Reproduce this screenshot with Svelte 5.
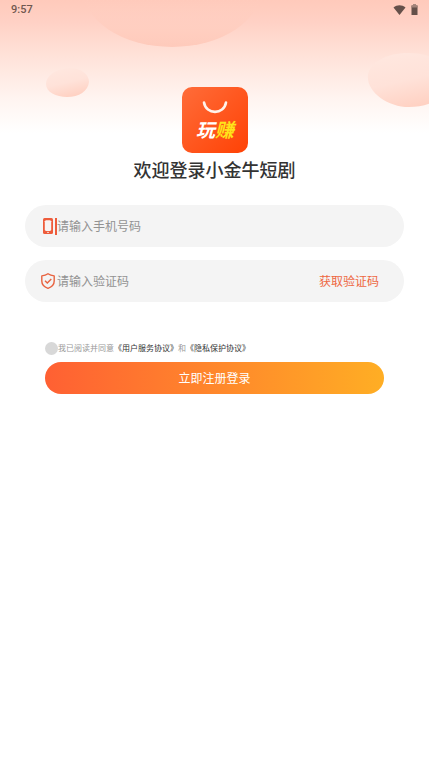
<script lang="ts">
  let phone = $state("");
  let code = $state("");
  let agreed = $state(false);
</script>

<div class="page">
  <svg class="backdrop" viewBox="0 0 429 140" preserveAspectRatio="none" aria-hidden="true">
    <defs>
      <linearGradient id="sky" x1="0" y1="0" x2="0" y2="1">
        <stop offset="0" stop-color="#ffcabb" />
        <stop offset="0.16" stop-color="#ffd1c5" />
        <stop offset="0.35" stop-color="#ffdfd5" />
        <stop offset="0.7" stop-color="#fff4f0" />
        <stop offset="0.95" stop-color="#ffffff" />
      </linearGradient>
      <linearGradient id="dome" x1="0" y1="0" x2="0" y2="1">
        <stop offset="0.6" stop-color="#ffcdbf" stop-opacity="0" />
        <stop offset="0.9" stop-color="#ffccbd" stop-opacity="0.9" />
        <stop offset="1" stop-color="#fecabb" />
      </linearGradient>
      <linearGradient id="pebble" x1="0.3" y1="0" x2="0.65" y2="1">
        <stop offset="0" stop-color="#ffe7df" />
        <stop offset="0.5" stop-color="#ffe2d9" />
        <stop offset="1" stop-color="#ffd0c1" />
      </linearGradient>
    </defs>
    <rect width="429" height="140" fill="url(#sky)" />
    <ellipse cx="172" cy="-13" rx="90" ry="60" fill="url(#dome)" />
    <path d="M46 84C46 76 55 69 69 68C82 68 89 75 89 82C88 91 79 97 67 97C56 97 46 92 46 84Z" fill="url(#pebble)" />
    <path d="M368 75C370 62 387 53 408 53C432 53 450 64 450 80C450 97 430 107 409 107C387 107 366 91 368 75Z" fill="url(#pebble)" />
  </svg>

  <header class="status">
    <span>9:57</span>
    <svg width="28" height="12" viewBox="0 0 28 12" aria-hidden="true">
      <path d="M0.5 3.5C4 0.4 9 0.4 12.5 3.5L6.5 11Z" fill="#65504a" />
      <path d="M18.5 1.5H20V0.5H23V1.5H24.5V11H18.5Z" fill="#65504a" />
      <path d="M18.5 1.5H20V0.5H23V1.5H24.5V3.5H18.5Z" fill="#a28279" />
    </svg>
  </header>

  <main>
    <svg class="logo" width="66" height="66" viewBox="0 0 66 66" role="img" aria-label="玩赚">
      <defs>
        <linearGradient id="tile" x1="0" y1="0" x2="1" y2="1">
          <stop offset="0" stop-color="#ff6c39" />
          <stop offset="1" stop-color="#ff4205" />
        </linearGradient>
      </defs>
      <rect width="66" height="66" rx="10" fill="url(#tile)" />
      <path d="M22 15.5C24 28 42 28 44 15.5" fill="none" stroke="#fff3eb" stroke-width="2.6" stroke-linecap="round" />
      <text x="14" y="50"><tspan fill="#fff">玩</tspan><tspan fill="#ffe31a">赚</tspan></text>
    </svg>
    <h1>欢迎登录小金牛短剧</h1>

    <form onsubmit={(event) => event.preventDefault()}>
      <div class="field">
        <label for="phone" aria-label="手机号码">
          <svg width="14" height="16" viewBox="0 0 14 16" aria-hidden="true">
            <rect x="2" y="0" width="10" height="16" rx="1.5" fill="#ee5c3b" />
            <path d="M4.8 2.2H9.2L10.2 3.2V12L9.2 13H4.800L3.800 12V3.200Z" fill="#f8f3f2" />
            <path d="M6 14.4H8" stroke="#f8d6cc" />
          </svg>
        </label>
        <span class="caret"></span>
        <input id="phone" type="tel" placeholder="请输入手机号码" bind:value={phone} />
      </div>

      <div class="field">
        <label for="code" aria-label="验证码">
          <svg width="14" height="16" viewBox="0 0 14 16" fill="none" stroke="#e8623f" aria-hidden="true">
            <path d="M7 0.8C8.8 2.1 10.8 2.700 13.200 2.900V8C13.200 11.700 10.700 14 7 15.300C3.300 14 0.800 11.700 0.800 8V2.900C3.200 2.700 5.200 2.100 7 0.800Z" stroke-width="1.400" stroke-linejoin="round" />
            <path d="M4 7.700L6.300 10L10.300 6" stroke-width="1.400" />
          </svg>
        </label>
        <span class="caret idle"></span>
        <input id="code" type="text" placeholder="请输入验证码" bind:value={code} />
        <button class="send" type="button">获取验证码</button>
      </div>

      <div class="confirm">
        <div class="terms">
          <input id="agree" type="checkbox" bind:checked={agreed} />
          <label for="agree">我已阅读并同意</label>
          <a href="#service">《用户服务协议》</a>
          <span>和</span>
          <a href="#privacy">《隐私保护协议》</a>
        </div>
        <button class="submit" type="submit">立即注册登录</button>
      </div>
    </form>
  </main>
</div>

<style>
:global(body) {
  margin: 0;
  background: #fff;
}

.page {
  position: relative;
  min-height: 100vh;
  font-family: "Noto Sans CJK SC", sans-serif;
  font-size: 12px;
  color: #333;
}

.backdrop {
  position: absolute;
  top: 0;
  left: 0;
  width: 100%;
  height: 140px;
}

.status {
  position: relative;
  display: flex;
  align-items: center;
  justify-content: space-between;
  height: 19px;
  padding: 0 8px 0 11px;
  font-family: Roboto, sans-serif;
  font-size: 11px;
  font-weight: 500;
  color: #705850;
}

main {
  position: relative;
  display: flex;
  flex-direction: column;
  align-items: center;
  padding: 68px 25px 0;
}

.logo {
  display: block;
}

.logo text {
  font-size: 19px;
  font-style: italic;
  font-weight: 700;
}

h1 {
  margin: 4px 0 0;
  font-size: 18px;
  font-weight: 500;
  line-height: 24px;
}

form {
  display: flex;
  flex-direction: column;
  gap: 13px;
  width: 100%;
  margin-top: 24px;
}

.field {
  display: flex;
  align-items: center;
  height: 42px;
  padding: 0 25px 0 16px;
  border-radius: 21px;
  background: #f4f4f4;
}

.field label {
  display: flex;
}

.caret {
  width: 2px;
  height: 17px;
  background: #ee5c3b;
}

.caret.idle {
  background: transparent;
}

input,
button {
  margin: 0;
  padding: 0;
  border: none;
  font: inherit;
}

.field input,
.field button,
.submit {
  padding-bottom: 2px;
}

.field input {
  flex: 1;
  min-width: 0;
  outline: none;
  color: #333;
  background: transparent;
}

.field input::placeholder {
  color: #929292;
  opacity: 1;
}

.send {
  color: #ee6742;
  background: none;
}

.confirm {
  margin: 26px 20px 0;
}

.terms {
  display: flex;
  align-items: center;
  height: 14px;
  margin-bottom: 7px;
  font-size: 8px;
  line-height: 12px;
  color: #999;
}

.terms input {
  appearance: none;
  width: 13px;
  height: 13px;
  border-radius: 50%;
  background: #d8d8d8;
}

.terms input:checked {
  background: #ff6633;
}

.terms a {
  color: #333;
  text-decoration: none;
}

.submit {
  width: 100%;
  height: 32px;
  border-radius: 16px;
  color: #fff;
  background: linear-gradient(90deg, #ff6033, #ffae24);
}
</style>
